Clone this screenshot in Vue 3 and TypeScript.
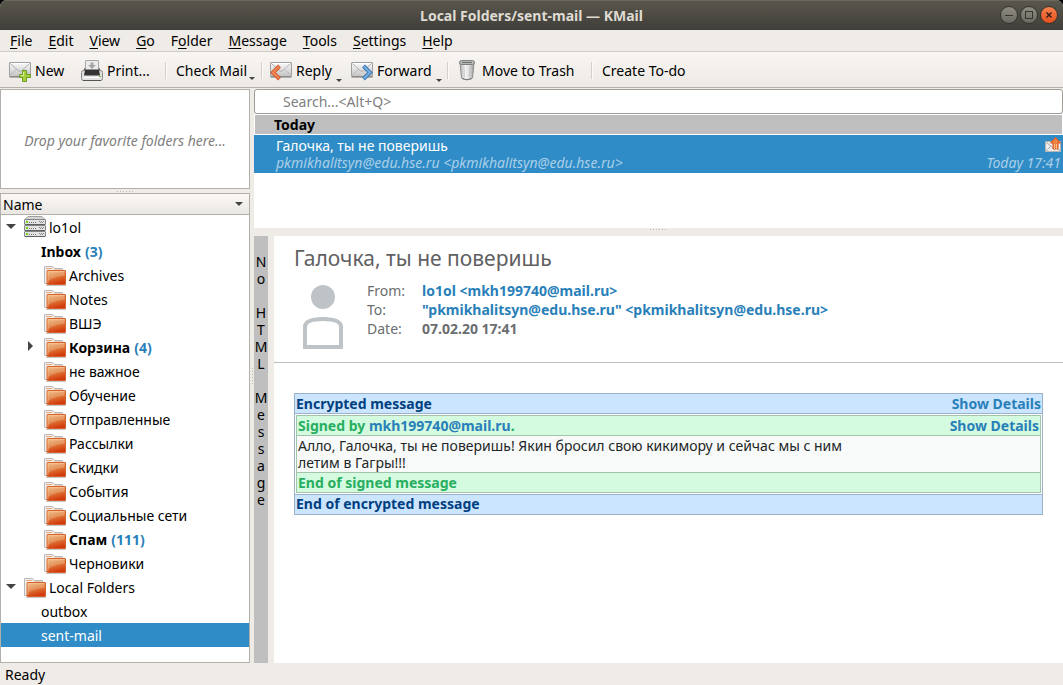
<script setup lang="ts">
interface MenuEntry {
  before: string
  key: string
  after: string
}
interface FolderRow {
  label: string
  kind: 'server' | 'folder' | 'root' | 'plain'
  count?: number
  arrow?: 'open' | 'closed'
  selected?: boolean
}

const menus: MenuEntry[] = [
  { before: '', key: 'F', after: 'ile' },
  { before: '', key: 'E', after: 'dit' },
  { before: '', key: 'V', after: 'iew' },
  { before: '', key: 'G', after: 'o' },
  { before: 'F', key: 'o', after: 'lder' },
  { before: '', key: 'M', after: 'essage' },
  { before: '', key: 'T', after: 'ools' },
  { before: '', key: 'S', after: 'ettings' },
  { before: '', key: 'H', after: 'elp' },
]

const folders: FolderRow[] = [
  { label: 'lo1ol', kind: 'server', arrow: 'open' },
  { label: 'Inbox', kind: 'plain', count: 3 },
  { label: 'Archives', kind: 'folder' },
  { label: 'Notes', kind: 'folder' },
  { label: 'ВШЭ', kind: 'folder' },
  { label: 'Корзина', kind: 'folder', count: 4, arrow: 'closed' },
  { label: 'не важное', kind: 'folder' },
  { label: 'Обучение', kind: 'folder' },
  { label: 'Отправленные', kind: 'folder' },
  { label: 'Рассылки', kind: 'folder' },
  { label: 'Скидки', kind: 'folder' },
  { label: 'События', kind: 'folder' },
  { label: 'Социальные сети', kind: 'folder' },
  { label: 'Спам', kind: 'folder', count: 111 },
  { label: 'Черновики', kind: 'folder' },
  { label: 'Local Folders', kind: 'root', arrow: 'open' },
  { label: 'outbox', kind: 'plain' },
  { label: 'sent-mail', kind: 'plain', selected: true },
]

const modeLetters: string = Array.from('No HTML Message').join('\n')
</script>

<template>
  <div class="window">
    <svg class="defs" aria-hidden="true">
      <defs>
        <linearGradient id="g-paper" x1="0" y1="0" x2="0" y2="1">
          <stop offset="0" stop-color="#fafafa" />
          <stop offset="1" stop-color="#c4c4c4" />
        </linearGradient>
        <linearGradient id="g-folder" x1="0" y1="0" x2="0.3" y2="1">
          <stop offset="0" stop-color="#f0b777" />
          <stop offset="0.5" stop-color="#e07d3c" />
          <stop offset="1" stop-color="#d23c0c" />
        </linearGradient>
        <linearGradient id="g-can" x1="0" y1="0" x2="1" y2="0">
          <stop offset="0" stop-color="#a8a8a8" />
          <stop offset="0.35" stop-color="#f6f6f6" />
          <stop offset="0.7" stop-color="#dadada" />
          <stop offset="1" stop-color="#959595" />
        </linearGradient>
        <symbol id="i-mail" viewBox="0 0 22 22">
          <rect x="0.5" y="2.5" width="21" height="14" rx="0.5" fill="url(#g-paper)" stroke="#a0a0a0" />
          <path d="M1 16V15L8 9M21 16V15L14 9" fill="none" stroke="#bdbdbd" />
          <path d="M1.500 3.500L9 10.500Q11 12 13 10.500L20.500 3.500" fill="none" stroke="#b0b0b0" />
          <path d="M2 3.500H20" stroke="#fff" />
          <path d="M0.500 17H21.500" stroke="#777" />
        </symbol>
        <symbol id="i-folder" viewBox="0 0 22 22">
          <path d="M0.500 19.500V2.500H8.500L10.500 4.500H18.500V19.500Z" fill="#f1f1f1" stroke="#b8b8b8" />
          <path d="M2 4.500H8.500M10 6H17" stroke="#eda36c" fill="none" />
          <rect x="3" y="6.500" width="18.500" height="14" rx="0.5" fill="url(#g-folder)" stroke="#d5622f" />
          <path d="M4 7.500H20.500V12Q12 12 4 17Z" fill="#fff" opacity="0.18" />
          <path d="M4 19V7.500H20.500" fill="none" stroke="#f8cf9f" opacity="0.6" />
          <path d="M2 21.500H22" stroke="#000" opacity="0.22" />
        </symbol>
        <symbol id="i-server" viewBox="0 0 22 22">
          <path d="M1 3.500L4 0.500H18L21 3.500Z" fill="#d5d5d5" stroke="#a0a0a0" />
          <g v-for="n in 3" :key="n" :transform="`translate(0 ${(n - 1) * 6})`">
            <rect x="0.5" y="3.500" width="21" height="5" rx="0.5" fill="#e3e3e3" stroke="#858585" />
            <path d="M1 8.500H21" stroke="#606060" />
            <rect x="2" y="5" width="2" height="2" fill="#73d216" />
            <path d="M5 6.500H12" stroke="#777" stroke-dasharray="1 1" />
            <path d="M15 5.500H20M16 6.500H20" stroke="#888" stroke-dasharray="1 1" fill="none" />
          </g>
        </symbol>
      </defs>
    </svg>

    <header class="titlebar">
      <h1 class="title">Local Folders/sent-mail — KMail</h1>
      <div class="controls">
        <button class="ctl" type="button" aria-label="Minimize">
          <svg viewBox="0 0 16 16"><path d="M4 8.500H12" stroke="#35342f" /></svg>
        </button>
        <button class="ctl" type="button" aria-label="Maximize">
          <svg viewBox="0 0 16 16"><rect x="4.500" y="4.500" width="7" height="7" fill="none" stroke="#35342f" /></svg>
        </button>
        <button class="ctl close" type="button" aria-label="Close">
          <svg viewBox="0 0 16 16"><path d="M5.500 5.500L10.500 10.500M10.500 5.500L5.500 10.500" stroke="#3a2018" stroke-width="1.500" /></svg>
        </button>
      </div>
    </header>

    <nav class="menubar" aria-label="Menu">
      <button v-for="m in menus" :key="m.before + m.key + m.after" type="button">{{ m.before }}<u>{{ m.key }}</u>{{ m.after }}</button>
    </nav>

    <div class="toolbar" role="toolbar" aria-label="Main toolbar">
      <button class="tool new" type="button">
        <svg class="icon" viewBox="0 0 22 22">
          <use href="#i-mail" />
          <path d="M13.500 10.500H17.500V14.500H21.500V17.500H17.500V21.500H13.500V17.500H10.500V14.500H13.500Z" fill="#a6cf3e" stroke="#6b9d20" />
          <path d="M14.500 12V15.500H12" stroke="#d9efa0" fill="none" />
        </svg>
        New
      </button>
      <button class="tool print" type="button">
        <svg class="icon" viewBox="0 0 22 22">
          <path d="M2.500 11L4 8H18L19.500 11Z" fill="#888" stroke="#666" />
          <rect x="4.500" y="0.500" width="13" height="10" rx="0.5" fill="#ededed" stroke="#a5a5a5" />
          <path d="M9.500 2.500H12.500V5H15L11 9L7 5H9.500Z" fill="#a6a6a6" />
          <rect x="0.500" y="10.500" width="21" height="10" rx="2" fill="#e2e2e2" stroke="#888" />
          <path d="M4 9.500H18L19 15.500H3Z" fill="#333" />
          <path d="M3 17.500H19" stroke="#fff" />
          <path d="M2 20.500H20" stroke="#555" />
          <rect x="18" y="16" width="2" height="1" fill="#73b62c" />
        </svg>
        Print...
      </button>
      <span class="sep"></span>
      <button class="tool check" type="button">Check Mail<span class="drop"></span></button>
      <span class="sep"></span>
      <button class="tool reply" type="button">
        <svg class="icon" viewBox="0 0 22 22">
          <use href="#i-mail" />
          <path d="M9.500 6L3 12.500L9.500 19" fill="none" stroke="#d2572a" stroke-width="4" />
          <path d="M9 6.500L3 12.500L9 18.500" fill="none" stroke="#f18a59" stroke-width="2" />
        </svg>
        Reply<span class="drop"></span>
      </button>
      <button class="tool forward" type="button">
        <svg class="icon" viewBox="0 0 22 22">
          <use href="#i-mail" />
          <path d="M12.500 6L19 12.500L12.500 19" fill="none" stroke="#3f7ab5" stroke-width="4" />
          <path d="M13 6.500L19 12.500L13 18.500" fill="none" stroke="#74aee2" stroke-width="2" />
        </svg>
        Forward<span class="drop"></span>
      </button>
      <span class="sep"></span>
      <button class="tool trash" type="button">
        <svg class="icon" viewBox="0 0 22 22">
          <path d="M4 3L5.500 18Q11 21.500 16.500 18L18 3Z" fill="url(#g-can)" stroke="#909090" />
          <path d="M8 6L8.500 17M14 6L13.500 17" stroke="#aaa" opacity="0.5" />
          <rect x="3.500" y="0.500" width="15" height="4" rx="2" fill="#b5b9b5" stroke="#808080" />
          <path d="M6 2.500H16" stroke="#6f726f" />
          <path d="M6 18.500Q11 21 16 18.500" fill="none" stroke="#777" />
        </svg>
        Move to Trash
      </button>
      <span class="sep"></span>
      <button class="tool todo" type="button">Create To-do</button>
    </div>

    <div class="workspace">
      <aside class="left">
        <section class="favorites">Drop your favorite folders here...</section>
        <div class="split-h"><span class="grip"></span></div>
        <section class="tree">
          <button class="tree-head" type="button">Name<span class="sort"></span></button>
          <ul>
            <li v-for="f in folders" :key="f.label" :class="[f.kind, { selected: f.selected, unread: f.count }]">
              <span v-if="f.arrow" class="expander" :class="f.arrow"></span>
              <svg v-if="f.kind !== 'plain'" class="icon" viewBox="0 0 22 22">
                <use :href="f.kind === 'server' ? '#i-server' : '#i-folder'" />
              </svg>
              <span>{{ f.label }}</span>
              <span v-if="f.count" class="count">({{ f.count }})</span>
            </li>
          </ul>
        </section>
      </aside>

      <div class="split-v"><span class="grip"></span></div>

      <main class="right">
        <input class="search" type="search" aria-label="Search" placeholder="Search...&lt;Alt+Q&gt;" />
        <section class="list">
          <h2 class="group">Today</h2>
          <article class="mail">
            <div class="line">
              <span>Галочка, ты не поверишь</span>
              <svg class="sent" viewBox="0 0 16 16">
                <rect x="0.500" y="4.500" width="15" height="10" fill="#eee" stroke="#b4b4b4" />
                <path d="M1 5L7.500 10.500L14 5M1 14L6 9M15 14L10 9" stroke="#aaa" fill="none" />
                <path d="M10.500 0.500L15.500 6H13V12H8V6H5.500Z" fill="#f08242" stroke="#d9501c" />
                <path d="M9.500 7V12M11.500 7V12" stroke="#f9c088" />
              </svg>
            </div>
            <div class="line sub">
              <span>pkmikhalitsyn@edu.hse.ru &lt;pkmikhalitsyn@edu.hse.ru&gt;</span>
              <time>Today 17:41</time>
            </div>
          </article>
        </section>
        <div class="split-h wide"><span class="grip"></span></div>
        <section class="reader">
          <div class="mode">{{ modeLetters }}</div>
          <div class="message">
            <header class="msg-head">
              <h2>Галочка, ты не поверишь</h2>
              <div class="meta">
                <svg class="avatar" viewBox="0 0 40 64">
                  <circle cx="20" cy="12" r="12" fill="#bdc3c7" />
                  <path d="M2 62V42Q2 34 20 34T38 42V62Z" fill="none" stroke="#bdc3c7" stroke-width="4" />
                </svg>
                <dl>
                  <dt>From:</dt>
                  <dd><a href="#">lo1ol &lt;mkh199740@mail.ru&gt;</a></dd>
                  <dt>To:</dt>
                  <dd><a href="#">"pkmikhalitsyn@edu.hse.ru" &lt;pkmikhalitsyn@edu.hse.ru&gt;</a></dd>
                  <dt>Date:</dt>
                  <dd>07.02.20 17:41</dd>
                </dl>
              </div>
            </header>
            <div class="encrypted">
              <div class="bar"><span>Encrypted message</span><a href="#">Show Details</a></div>
              <div class="signed">
                <div class="bar"><span>Signed by <a href="#">mkh199740@mail.ru</a>.</span><a href="#">Show Details</a></div>
                <p>Алло, Галочка, ты не поверишь! Якин бросил свою кикимору и сейчас мы с ним<br />летим в Гагры!!!</p>
                <div class="bar">End of signed message</div>
              </div>
              <div class="bar">End of encrypted message</div>
            </div>
          </div>
        </section>
      </main>
    </div>

    <footer class="status">Ready</footer>
  </div>
</template>

<style>
body {
  margin: 0;
  background: #000;
}
</style>

<style scoped>
.window {
  display: flex;
  flex-direction: column;
  min-height: 100vh;
  box-sizing: border-box;
  background: #efebe7;
  border-radius: 7px 7px 0 0;
  overflow: hidden;
  font: 14px/17px "Noto Sans", "Open Sans", sans-serif;
  color: #000;
  white-space: nowrap;
}
.window * {
  box-sizing: border-box;
}
button {
  font: inherit;
  color: inherit;
  border: 0;
  padding: 0;
  background: none;
}
a {
  color: #2980b9;
  text-decoration: none;
}
.defs {
  position: absolute;
  width: 0;
  height: 0;
}
.icon {
  width: 22px;
  height: 22px;
  flex: none;
}

.titlebar {
  display: grid;
  grid-template-columns: 1fr auto 1fr;
  align-items: center;
  height: 30px;
  padding: 0 5px;
  background: linear-gradient(#5a574d, #3f3e39);
  box-shadow: inset 0 1px #6b675c;
}
.title {
  grid-column: 2;
  margin: 0;
  font-size: 14px;
  font-weight: 700;
  color: #dfdbd2;
}
.controls {
  display: flex;
  justify-content: flex-end;
  gap: 2px;
}
.ctl {
  width: 18px;
  height: 18px;
  border: 1px solid #35342f;
  border-radius: 50%;
  background: linear-gradient(#8f8c82, #6b6961);
}
.ctl svg {
  display: block;
  width: 16px;
  height: 16px;
}
.ctl.close {
  background: linear-gradient(#f7824f, #e2501c);
}

.menubar {
  display: flex;
  gap: 16px;
  height: 22px;
  padding: 0 10px;
  border-bottom: 1px solid #cfcbc7;
}
.menubar u {
  text-underline-offset: 2px;
  text-decoration-thickness: 1px;
}

.toolbar {
  display: flex;
  align-items: center;
  height: 36px;
  padding: 2px 9px 0;
  background: linear-gradient(#f8f5f2, #edeae6);
  border-bottom: 1px solid #b3afab;
}
.tool {
  display: flex;
  align-items: center;
  gap: 4px;
  height: 24px;
}
.sep {
  width: 2px;
  height: 17px;
  border-left: 1px solid #d3cfcb;
  border-right: 1px solid #fcfbfa;
}
.drop {
  align-self: flex-end;
  margin-bottom: 1px;
  border: 3px solid transparent;
  border-top-color: #444;
  border-bottom: 0;
}
.new {
  width: 72px;
}
.print {
  width: 84px;
}
.check {
  gap: 2px;
  width: 94px;
  padding-left: 9px;
}
.check .drop {
  margin-bottom: 3px;
}
.reply {
  width: 88px;
  padding-left: 7px;
}
.forward {
  width: 96px;
}
.trash {
  width: 142px;
  padding-left: 7px;
}
.todo {
  padding-left: 9px;
}

.workspace {
  display: flex;
  flex: 1;
  padding-top: 1px;
}
.left {
  display: flex;
  flex-direction: column;
  width: 250px;
}
.favorites {
  display: grid;
  place-items: center;
  height: 100px;
  padding-top: 2px;
  background: #fff;
  border: 1px solid #b3afab;
  color: #808080;
  font-style: italic;
}
.split-h {
  display: grid;
  place-items: center;
  height: 4px;
}
.split-h.wide {
  height: 8px;
  padding-top: 1px;
  place-items: start center;
}
.grip {
  width: 17px;
  height: 1px;
  background: repeating-linear-gradient(90deg, #bbb7b3 0 1px, transparent 1px 3px);
}
.split-v {
  display: grid;
  place-items: center;
  width: 4px;
}
.split-v .grip {
  width: 1px;
  height: 17px;
  background: repeating-linear-gradient(#bbb7b3 0 1px, transparent 1px 3px);
}
.tree {
  flex: 1;
  background: #fff;
  border: 1px solid #b3afab;
}
.tree-head {
  display: flex;
  align-items: center;
  justify-content: space-between;
  width: 100%;
  height: 21px;
  padding: 0 6px 0 2px;
  background: linear-gradient(#fbf8f5, #eae7e3);
  border-bottom: 1px solid #b3afab;
}
.sort {
  border: 4px solid transparent;
  border-top-color: #444;
  border-bottom: 0;
}
ul {
  margin: 0;
  padding: 0;
  list-style: none;
}
li {
  position: relative;
  display: flex;
  align-items: center;
  gap: 3px;
  height: 24px;
  padding-left: 43px;
}
li.server,
li.root {
  padding-left: 23px;
}
li.plain {
  padding-left: 40px;
}
li.selected {
  background: #308cc6;
  color: #fff;
}
li.unread {
  font-weight: 700;
}
.count {
  padding-left: 1px;
  color: #2980b9;
}
.expander {
  position: absolute;
  left: 5px;
  top: 9px;
  border: 5px solid transparent;
  border-top-color: #444;
  border-bottom: 0;
}
.expander.closed {
  left: 27px;
  top: 6px;
  border: 5px solid transparent;
  border-left-color: #444;
  border-right: 0;
}

.right {
  display: flex;
  flex-direction: column;
  flex: 1;
  min-width: 0;
}
.search {
  width: 100%;
  height: 25px;
  padding: 0 28px;
  border: 1px solid #a09c98;
  border-radius: 3px;
  background: #fff;
  font: inherit;
  appearance: none;
}
.search::placeholder {
  color: #808080;
  opacity: 1;
}
.list {
  height: 114px;
  padding-top: 1px;
  background: #fff;
}
.group {
  height: 19px;
  margin: 0 1px 1px;
  padding: 1px 19px;
  background: #bfbfbf;
  font-size: 14px;
  font-weight: 700;
}
.mail {
  height: 38px;
  padding: 2px 2px 2px 22px;
  background: #308cc6;
  color: #fff;
}
.line {
  display: flex;
  justify-content: space-between;
}
.sub {
  color: #a9cfe8;
  font-style: italic;
}
.sent {
  width: 16px;
  height: 16px;
}
.reader {
  display: flex;
  flex: 1;
}
.mode {
  display: flex;
  justify-content: center;
  width: 14px;
  padding-top: 17px;
  background: #bfbfbf;
  text-align: center;
  white-space: pre-line;
}
.message {
  flex: 1;
  margin-left: 6px;
  background: #fff;
}
.msg-head {
  height: 127px;
  padding: 8px 20px 0;
  border-bottom: 1px solid #bdbdbd;
}
.msg-head h2 {
  margin: 0 0 9px;
  font-size: 21px;
  line-height: 28px;
  font-weight: 400;
  color: #5f6061;
}
.meta {
  display: flex;
  padding-left: 9px;
}
.avatar {
  width: 40px;
  height: 64px;
  margin: 4px 24px 0 0;
}
dl {
  display: grid;
  grid-template-columns: 55px auto;
  align-content: start;
  margin: 0;
  line-height: 19px;
  color: #6b6e70;
}
dd {
  margin: 0;
  font-weight: 700;
}
.encrypted {
  margin: 30px 20px 0;
  border: 1px solid #9ab3cb;
  color: #00407f;
}
.bar {
  display: flex;
  justify-content: space-between;
  height: 19px;
  padding: 1px;
  background: #cce5ff;
  font-weight: 700;
}
.bar span {
  white-space: pre;
}
.encrypted > .bar:first-child {
  height: 20px;
  border-bottom: 1px solid #9ab3cb;
}
.encrypted > .bar:last-child {
  height: 20px;
  padding-top: 0;
  border-top: 1px solid #9ab3cb;
}
.signed {
  margin: 1px;
  border: 1px solid #a3c3ad;
  color: #27ae60;
}
.signed .bar {
  background: #d4fae0;
}
.signed p {
  margin: 0;
  padding: 1px;
  border: solid #a3c3ad;
  border-width: 1px 0;
  background: #f8faf9;
  color: #232627;
}

.status {
  height: 22px;
  padding: 3px 5px;
}
</style>
